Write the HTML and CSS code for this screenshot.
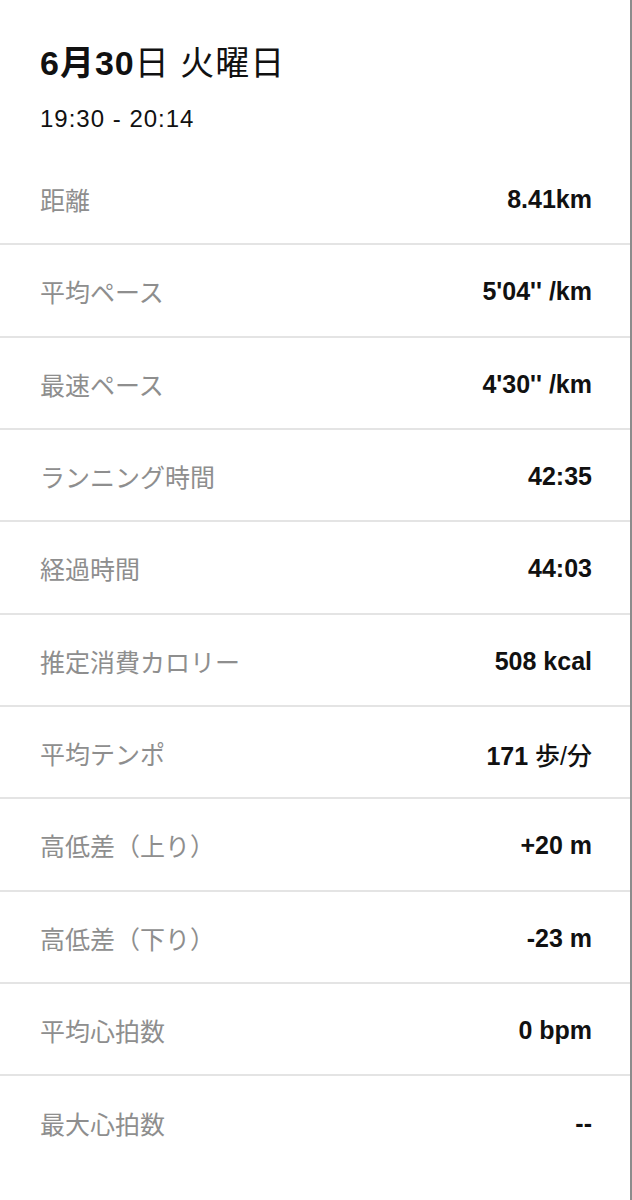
FILE: index.html
```html
<!DOCTYPE html>
<html lang="ja">
<head>
    <meta charset="UTF-8">
    <meta name="viewport" content="width=device-width, initial-scale=1.0">
    <title>アクティビティ詳細</title>
    <link rel="stylesheet" href="styles.css">
</head>
<body>
    <div class="screen">
        <div class="header">
            <h1 class="date"><b>6月30</b>日 火曜日</h1>
            <p class="time">19:30 - 20:14</p>
        </div>
        <ul class="stats">
            <li class="row"><span class="label">距離</span><span class="value">8.41km</span></li>
            <li class="row"><span class="label">平均ペース</span><span class="value">5'04'' /km</span></li>
            <li class="row"><span class="label">最速ペース</span><span class="value">4'30'' /km</span></li>
            <li class="row"><span class="label">ランニング時間</span><span class="value">42:35</span></li>
            <li class="row"><span class="label">経過時間</span><span class="value">44:03</span></li>
            <li class="row"><span class="label">推定消費カロリー</span><span class="value">508 kcal</span></li>
            <li class="row"><span class="label">平均テンポ</span><span class="value">171 <span class="unit">歩/分</span></span></li>
            <li class="row"><span class="label">高低差（上り）</span><span class="value">+20 m</span></li>
            <li class="row"><span class="label">高低差（下り）</span><span class="value">-23 m</span></li>
            <li class="row"><span class="label">平均心拍数</span><span class="value">0 bpm</span></li>
            <li class="row last"><span class="label">最大心拍数</span><span class="value">--</span></li>
        </ul>
    </div>
</body>
</html>
```

FILE: styles.css
```css
body {
    margin: 0;
    background-color: #fff;
    font-family: "Liberation Sans", "Noto Sans CJK JP", sans-serif;
}
.screen {
    min-height: 1200px;
    border-right: 2px solid #8c8c8c;
    box-sizing: border-box;
}
.header {
    padding: 43px 40px 0;
}
.date {
    margin: 0;
    font-size: 34px;
    line-height: 40px;
    font-weight: 400;
    letter-spacing: 1px;
    color: #111;
}
.date b {
    font-weight: 700;
}
.time {
    margin: 21px 0 0;
    font-size: 24px;
    line-height: 30px;
    letter-spacing: 1px;
    color: #111;
}
.stats {
    list-style: none;
    margin: 19px 0 0;
    padding: 0;
}
.row {
    display: flex;
    justify-content: space-between;
    align-items: center;
    height: 92.33px;
    box-sizing: border-box;
    padding: 0 38px 0 40px;
    border-bottom: 2px solid #e4e4e4;
}
.row.last {
    border-bottom: none;
}
.label {
    font-size: 25px;
    color: #8e8e8e;
    padding-top: 2px;
}
.value {
    font-size: 25px;
    font-weight: 700;
    color: #111;
    padding-top: 3px;
}
.unit {
    font-weight: 500;
}
```
